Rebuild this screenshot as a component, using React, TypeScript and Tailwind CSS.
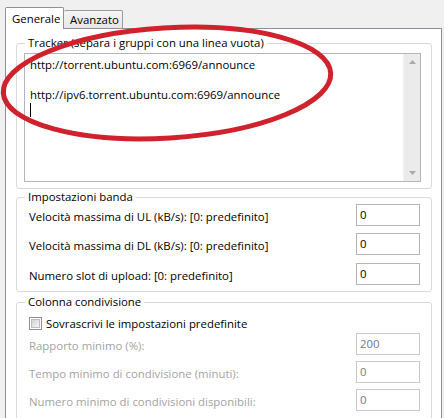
import React from "react";

function GroupBox({
  title,
  className,
  children,
}: {
  title: string;
  className?: string;
  children: React.ReactNode;
}) {
  return (
    <fieldset
      className={
        "ml-[10px] w-[416px] rounded-[3px] border border-[#d7dbde] " +
        (className ?? "")
      }
    >
      <legend className="ml-[8px] px-[3px] text-[11.4px] leading-[14px] text-black">
        {title}
      </legend>
      {children}
    </fieldset>
  );
}

function Field({ value, disabled }: { value: string; disabled?: boolean }) {
  return (
    <div
      className={
        "flex h-[22px] w-[64px] items-center border pl-[3px] text-[11.4px] " +
        (disabled
          ? "border-[#c9c9c9] text-[#777777]"
          : "border-[#b3b5ba] text-black")
      }
    >
      {value}
    </div>
  );
}

function Row({
  label,
  value,
  disabled,
}: {
  label: string;
  value: string;
  disabled?: boolean;
}) {
  return (
    <div className="flex h-[22px] items-center justify-between">
      <span
        className={
          "pt-[3px] text-[11.4px] " + (disabled ? "text-[#a3a3a3]" : "text-black")
        }
      >
        {label}
      </span>
      <Field value={value} disabled={disabled} />
    </div>
  );
}

export default function App() {
  return (
    <div className="relative h-[418px] w-[444px] overflow-hidden bg-[#f0f0f0] font-['Open_Sans',sans-serif] text-black">
      {/* Tabs */}
      <div className="flex h-[29px] items-end pl-[5px]">
        <div className="relative z-10 flex h-[22px] w-[59px] items-center rounded-t-[2px] border border-b-0 border-[#8e9199] bg-white pl-[6px] text-[11.4px]">
          Generale
        </div>
        <div className="mb-[1px] flex h-[18px] w-[59px] items-center rounded-t-[2px] border border-b-0 border-l-0 border-[#9a9ca2] bg-gradient-to-b from-[#f5f5f5] to-[#e6e6e6] pl-[6px] text-[11.4px]">
          Avanzato
        </div>
      </div>

      {/* Panel */}
      <div className="-mt-px ml-[5px] h-[400px] w-[437px] border border-b-0 border-[#8e9199] bg-white">
        <GroupBox title="Tracker (separa i gruppi con una linea vuota)" className="mt-[7px] pb-[6px]">
          <div className="ml-[7px] mt-[3px] flex h-[129px] w-[397px] border border-[#b3b5ba] bg-white">
            <div className="flex-1 pl-[5px] pt-[3px] text-[11.4px] leading-[15px]">
              <div>http://torrent.ubuntu.com:6969/announce</div>
              <div className="h-[15px]" />
              <div>http://ipv6.torrent.ubuntu.com:6969/announce</div>
              <div className="flex h-[15px] items-center">
                <div className="h-[14px] w-px bg-black" />
              </div>
            </div>
            <div className="flex w-[17px] flex-col items-center justify-between border-l border-[#f4f4f4] bg-[#ebebeb] py-[6px]">
              <svg width="7" height="4" viewBox="0 0 7 4">
                <path d="M0 4 L3.5 0 L7 4 Z" fill="#a9a9a9" />
              </svg>
              <svg width="7" height="4" viewBox="0 0 7 4">
                <path d="M0 0 L7 0 L3.5 4 Z" fill="#a9a9a9" />
              </svg>
            </div>
          </div>
        </GroupBox>

        <GroupBox title="Impostazioni banda" className="mt-[1px] pb-[6px]">
          <div className="flex flex-col gap-[7px] pl-[12px] pr-[11px]">
            <Row label="Velocità massima di UL (kB/s): [0: predefinito]" value="0" />
            <Row label="Velocità massima di DL (kB/s): [0: predefinito]" value="0" />
            <div className="mt-px">
              <Row label="Numero slot di upload: [0: predefinito]" value="0" />
            </div>
          </div>
        </GroupBox>

        <GroupBox title="Colonna condivisione" className="mt-[3px] pb-[10px]">
          <div className="pl-[12px] pr-[11px]">
            <div className="mt-[5px] flex h-[18px] items-center">
              <div className="flex h-[13px] w-[13px] items-center justify-center border border-[#8f8f8f] bg-white">
                <div className="h-[9px] w-[9px] border border-[#bdbdbd] bg-gradient-to-br from-[#d2d2d2] to-[#f6f6f6]" />
              </div>
              <span className="ml-[4px] pt-[2px] text-[11.4px]">
                Sovrascrivi le impostazioni predefinite
              </span>
            </div>
            <div className="mt-px flex flex-col gap-[6px]">
              <Row label="Rapporto minimo (%):" value="200" disabled />
              <Row label="Tempo minimo di condivisione (minuti):" value="0" disabled />
              <Row label="Numero minimo di condivisioni disponibili:" value="0" disabled />
            </div>
          </div>
        </GroupBox>
      </div>

      {/* Red annotation ellipse */}
      <svg
        className="pointer-events-none absolute left-0 top-0"
        width="444"
        height="418"
        viewBox="0 0 444 418"
      >
        <ellipse
          cx="167"
          cy="83"
          rx="164"
          ry="55"
          transform="rotate(-3.5 167 83)"
          fill="none"
          stroke="#d0222c"
          strokeWidth="5"
        />
      </svg>
    </div>
  );
}
